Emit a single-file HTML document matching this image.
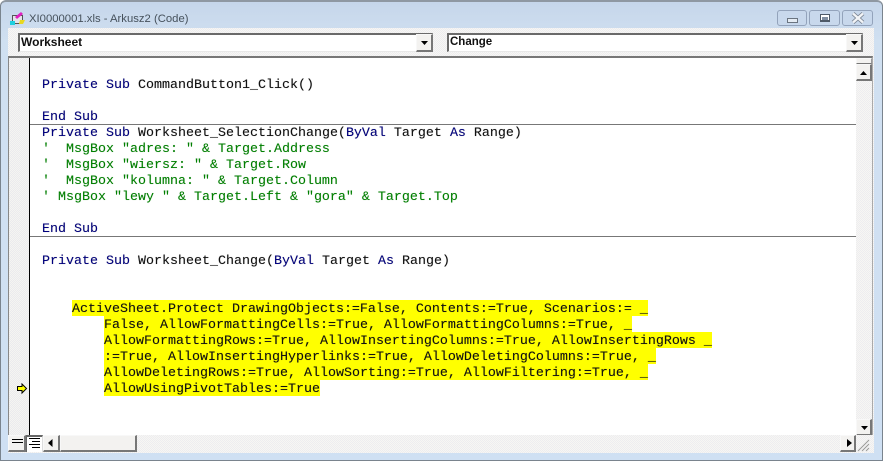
<!DOCTYPE html>
<html><head><meta charset="utf-8"><style>
html,body{margin:0;padding:0;width:884px;height:463px;overflow:hidden;background:#fff}
div,span{position:absolute;box-sizing:border-box}
#win{left:0;top:0;width:883px;height:461px;background:linear-gradient(#c6d6ea,#d0e0f1 40px,#cfe0f3);border:1px solid #7a848e;border-top:2px solid #8f98a2;border-radius:6px 6px 0 0;}
#inner{left:8px;top:28px;width:866px;height:425px;background:repeating-conic-gradient(#f7f7f3 0 25%,#edecf0 0 50%) 0 0/2px 2px}
.t{font:11.3px "Liberation Sans",sans-serif;color:#46515c;white-space:pre}
.combo{background:#fff;border-top:2px solid #6a6a6a;border-left:2px solid #6a6a6a;border-right:1px solid #e8e8e8;border-bottom:1px solid #e8e8e8;height:19px;top:33px;font:bold 12px "Liberation Sans",sans-serif;color:#111;line-height:15px;padding-left:1px;white-space:pre}
.btn{background:#f3f2f0;border-top:1px solid #f8f8f8;border-left:1px solid #f8f8f8;border-right:2px solid #777;border-bottom:2px solid #777}
.wb{top:10px;height:16px;border:1px solid #93a3bb;border-radius:3px;background:#c8d8ec}
#pane{left:8px;top:56px;width:865px;height:396px;border-top:2px solid #777;border-left:1px solid #888;border-right:1px solid #aaa}
#code{left:29px;top:58px;width:827px;height:377px;background:#fff;border-left:1px solid #000}
#margin{left:9px;top:58px;width:20px;height:377px;background:repeating-conic-gradient(#f5f5f1 0 25%,#ebeaee 0 50%) 0 0/2px 2px}
.l{left:42px;font:13.33px/20px "Liberation Mono",monospace;white-space:pre;height:16px;color:#111;text-shadow:0 0 .6px rgba(0,0,0,.45)}
.k{position:static;color:#00007f}
.g{color:#007f00;text-shadow:0 0 .6px rgba(0,110,0,.45)}
.h{position:static;background:#ff0;}
.sep{left:30px;width:826px;height:1px;background:#777}
</style></head><body>
<div id="win"></div>
<div id="inner"></div>
<svg style="position:absolute;left:9px;top:11px" width="17" height="15" viewBox="0 0 17 15"><rect x="3.500" y="4.500" width="10" height="8" fill="#e4e4e8" stroke="#555"/><path d="M6 6l6-5 2 2-6 5z" fill="#e020c0"/><path d="M1 10h5v4H1z" fill="#20d0e0"/><path d="M11 9h5l-2 4h-4z" fill="#e8d820"/></svg>
<div class="t" style="left:29px;top:12px;height:15px;line-height:15px">XI0000001.xls - Arkusz2 (Code)</div>
<div class="wb" style="left:777px;width:30px"></div><div style="left:787px;top:18px;width:11px;height:5px;border:1px solid #6a7480;background:#e4ebf3"></div>
<div class="wb" style="left:809px;width:31px"></div><div style="left:820px;top:14px;width:10px;height:8px;border:1px solid #4f5a68;border-width:1px 1px 2px;background:#fff"></div><div style="left:822px;top:17px;width:6px;height:3px;background:#7f8da0"></div>
<div class="wb" style="left:842px;width:31px"></div>
<svg style="position:absolute;left:851px;top:12px" width="14" height="12"><path d="M2 1.500l10 9M12 1.500l-10 9" stroke="#7c8694" stroke-width="4" fill="none"/><path d="M2 1.500l10 9M12 1.500l-10 9" stroke="#f2f4f7" stroke-width="2.400" fill="none"/></svg>

<div class="combo" style="left:18px;width:415px">Worksheet</div>
<div class="btn" style="left:416px;top:34px;width:17px;height:18px"></div>
<svg style="position:absolute;left:420px;top:40px" width="9" height="6"><path d="M1 1h7L4.500 5z" fill="#000"/></svg>
<div class="combo" style="left:447px;width:416px;font-size:11.5px">Change</div>
<div class="btn" style="left:846px;top:34px;width:17px;height:18px"></div>
<svg style="position:absolute;left:850px;top:40px" width="9" height="6"><path d="M1 1h7L4.500 5z" fill="#000"/></svg>

<div id="pane"></div>
<div id="margin"></div>
<div id="code"></div>

<div class="l" style="top:76px"><span class="k">Private Sub</span> CommandButton1_Click()</div>
<div class="l" style="top:108px"><span class="k">End Sub</span></div>
<div class="sep" style="top:124px"></div>
<div class="l" style="top:124px"><span class="k">Private Sub</span> Worksheet_SelectionChange(<span class="k">ByVal</span> Target <span class="k">As</span> Range)</div>
<div class="l g" style="top:140px">'  MsgBox "adres: " &amp; Target.Address</div>
<div class="l g" style="top:156px">'  MsgBox "wiersz: " &amp; Target.Row</div>
<div class="l g" style="top:172px">'  MsgBox "kolumna: " &amp; Target.Column</div>
<div class="l g" style="top:188px">' MsgBox "lewy " &amp; Target.Left &amp; "gora" &amp; Target.Top</div>
<div class="l" style="top:220px"><span class="k">End Sub</span></div>
<div class="sep" style="top:236px"></div>
<div class="l" style="top:252px"><span class="k">Private Sub</span> Worksheet_Change(<span class="k">ByVal</span> Target <span class="k">As</span> Range)</div>

<div class="l h" style="position:absolute;left:72px;top:300px">ActiveSheet.Protect DrawingObjects:=False, Contents:=True, Scenarios:= _</div>
<div class="l h" style="position:absolute;left:104px;top:316px">False, AllowFormattingCells:=True, AllowFormattingColumns:=True, _</div>
<div class="l h" style="position:absolute;left:104px;top:332px">AllowFormattingRows:=True, AllowInsertingColumns:=True, AllowInsertingRows _</div>
<div class="l h" style="position:absolute;left:104px;top:348px">:=True, AllowInsertingHyperlinks:=True, AllowDeletingColumns:=True, _</div>
<div class="l h" style="position:absolute;left:104px;top:364px">AllowDeletingRows:=True, AllowSorting:=True, AllowFiltering:=True, _</div>
<div class="l h" style="position:absolute;left:104px;top:380px">AllowUsingPivotTables:=True</div>

<svg style="position:absolute;left:16px;top:383px" width="12" height="12"><path d="M1.500 3.500h4.500V1l4.500 4.500L6 10V7.500H1.500z" fill="#ff0" stroke="#000"/></svg>

<!-- vertical scrollbar -->
<div style="left:856px;top:58px;width:16px;height:377px;background:repeating-conic-gradient(#f7f7f3 0 25%,#edecf0 0 50%) 0 0/2px 2px"></div>
<div class="btn" style="left:856px;top:58px;width:16px;height:6px;border-right:1px solid #999;border-bottom:1px solid #777"></div>
<div class="btn" style="left:856px;top:64px;width:16px;height:17px"></div>
<svg style="position:absolute;left:859px;top:70px" width="9" height="6"><path d="M1 5h7L4.500 1z" fill="#000"/></svg>
<div class="btn" style="left:856px;top:419px;width:16px;height:17px"></div>
<svg style="position:absolute;left:860px;top:425px" width="9" height="6"><path d="M1 1h7L4.500 5z" fill="#000"/></svg>

<!-- bottom bar -->
<div style="left:9px;top:435px;width:864px;height:17px;background:repeating-conic-gradient(#f7f7f3 0 25%,#edecf0 0 50%) 0 0/2px 2px"></div>
<div class="btn" style="left:8px;top:435px;width:18px;height:17px"></div>
<svg style="position:absolute;left:10px;top:437px" width="14" height="11"><path d="M2 2.500h11M2 5.500h11" stroke="#000"/></svg>
<div style="left:26px;top:435px;width:17px;height:17px;background:#fff;border-top:2px solid #666;border-left:1px solid #666;border-right:1px solid #ddd"></div>
<svg style="position:absolute;left:27px;top:437px" width="15" height="13"><path d="M2 1.500h11M5 4.500h8M2 7.500h11M5 10.500h8" stroke="#000"/></svg>
<div class="btn" style="left:43px;top:435px;width:17px;height:17px"></div>
<svg style="position:absolute;left:47px;top:438px" width="7" height="10"><path d="M5.500 1v8L1 5z" fill="#000"/></svg>
<div class="btn" style="left:60px;top:435px;width:77px;height:17px"></div>
<div class="btn" style="left:840px;top:435px;width:16px;height:17px"></div>
<svg style="position:absolute;left:846px;top:438px" width="7" height="10"><path d="M1 1v8l5-4z" fill="#000"/></svg>
<svg style="position:absolute;left:857px;top:439px" width="14" height="13"><path d="M1 12L12 1M5 12l7-7M9 12l3-3" stroke="#999" fill="none"/></svg>
</body></html>
